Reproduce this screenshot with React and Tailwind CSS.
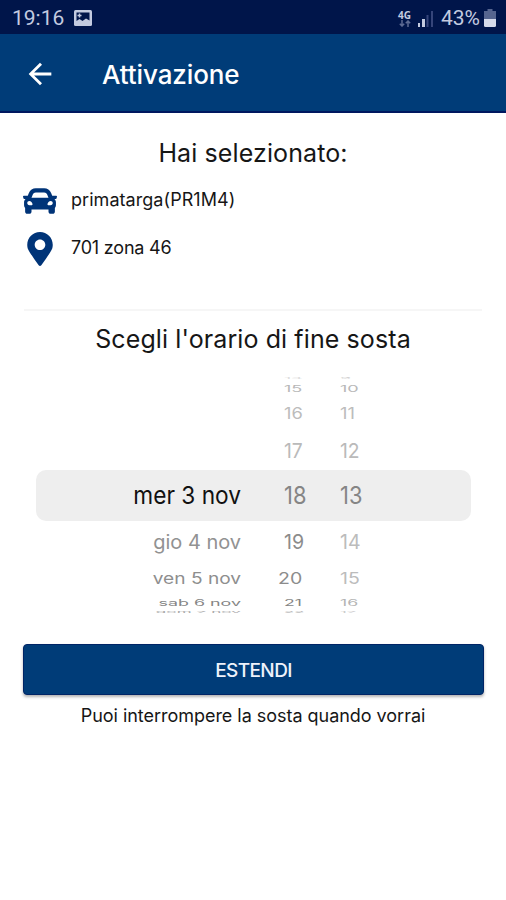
import { FaCar, FaMapMarkerAlt } from 'react-icons/fa'
import { MdArrowBack } from 'react-icons/md'

// one entry per visible line of the wheel, squashed towards the edges
const ROWS = [
    { height: 5, dateSx: 1, sx: 0.85, sy: 0.1, date: '', hour: '14', minute: '9', dateColor: '#999', hourColor: '#ddd', minuteColor: '#ccc' },
    { height: 15, dateSx: 1, sx: 0.86, sy: 0.44, date: '', hour: '15', minute: '10', dateColor: '#999', hourColor: '#b8b8b8', minuteColor: '#b8b8b8' },
    { height: 34, dateSx: 1, sx: 0.87, sy: 0.75, date: '', hour: '16', minute: '11', dateColor: '#999', hourColor: '#bcbcbc', minuteColor: '#bcbcbc' },
    { height: 40, dateSx: 1, sx: 0.92, sy: 0.97, date: '', hour: '17', minute: '12', dateColor: '#999', hourColor: '#bababa', minuteColor: '#bababa' },
    { height: 51, dateSx: 1.08, sx: 1.04, sy: 1.15, date: 'mer 3 nov', hour: '18', minute: '13', dateColor: '#111', hourColor: '#858585', minuteColor: '#858585' },
    { height: 40, dateSx: 0.95, sx: 0.93, sy: 0.95, date: 'gio 4 nov', hour: '19', minute: '14', dateColor: '#929292', hourColor: '#8c8c8c', minuteColor: '#bcbcbc' },
    { height: 34, dateSx: 0.91, sx: 0.93, sy: 0.75, date: 'ven 5 nov', hour: '20', minute: '15', dateColor: '#8e8e8e', hourColor: '#8c8c8c', minuteColor: '#bcbcbc' },
    { height: 14, dateSx: 0.85, sx: 0.84, sy: 0.42, date: 'sab 6 nov', hour: '21', minute: '16', dateColor: '#858585', hourColor: '#858585', minuteColor: '#b4b4b4' },
    { height: 6, dateSx: 0.82, sx: 0.8, sy: 0.13, date: 'dom 7 nov', hour: '22', minute: '17', dateColor: '#aaa', hourColor: '#b4b4b4', minuteColor: '#ccc' },
]

function StatusBar() {
    return (
        <div className="flex h-[34px] items-center justify-between bg-[#00154a] pl-3 pr-[10px] pt-0.5 font-[Roboto,sans-serif] text-[#c3cbe0]">
            <div className="flex items-center gap-[10px]">
                <span className="text-[21px] leading-none">19:16</span>
                <svg width="18" height="16" viewBox="0 0 18 16">
                    <rect width="18" height="16" rx="1.5" fill="#c3cbe0" />
                    <path d="M2.5 2.5h13v8l-3.500-2-3.500 2.500-3-2-3 2z" fill="#00154a" />
                    <path d="M5.500 3.500v4M3.500 5.500h4" stroke="#c3cbe0" strokeWidth="1.500" />
                </svg>
            </div>
            <div className="flex items-center">
                <div className="mr-[7px] flex flex-col items-center">
                    <span className="font-['Open_Sans',sans-serif] text-[10px] font-bold leading-[10px]">4G</span>
                    <svg width="12" height="7" viewBox="0 0 12 7" fill="none" stroke="#5d6b93" strokeWidth="1.5">
                        <path d="M3 0v6M.8 3.7 3 6l2.200-2.300M9 7V1M6.800 3.300 9 1l2.200 2.300" />
                    </svg>
                </div>
                <svg className="mr-[7px]" width="16" height="17" viewBox="0 0 16 17">
                    <rect x="0" y="13" width="2" height="4" fill="#c3cbe0" />
                    <rect x="4" y="9" width="3" height="8" fill="#c3cbe0" />
                    <rect x="8.5" y="5" width="2" height="12" fill="#35457a" />
                    <rect x="13" y="1" width="2" height="16" fill="#35457a" />
                </svg>
                <span className="mr-1 text-[21px] leading-none">43%</span>
                <svg width="12" height="18" viewBox="0 0 12 18">
                    <path d="M3.5 0h5v2H12v8H0V2h3.500z" fill="#56658f" />
                    <path d="M0 10h12v6.500Q12 18 10.500 18h-9Q0 18 0 16.500z" fill="#d5daea" />
                </svg>
            </div>
        </div>
    )
}

function Header() {
    return (
        <header className="flex h-[79px] items-center border-b-2 border-[#00185f] bg-[#003c78] pl-[23px] pt-0.5 text-white">
            <MdArrowBack size={34} />
            <h1 className="ml-[45px] pt-0.5 text-[26px] font-medium tracking-[-0.1px]">Attivazione</h1>
        </header>
    )
}

function WheelRow({ row }) {
    const transform = `scale(${row.sx}, ${row.sy})`

    return (
        <div className="flex shrink-0 items-center text-[21px] leading-none" style={{ height: row.height }}>
            <span
                className="w-[205px] origin-right whitespace-nowrap text-right"
                style={{ transform: `scale(${row.dateSx}, ${row.sy})`, color: row.dateColor }}
            >
                {row.date}
            </span>
            <span
                className={row.hour === '20' ? 'ml-[37px] mr-[6px] w-[30px] origin-left' : 'ml-[43px] w-[30px] origin-left'}
                style={{ transform, color: row.hourColor }}
            >
                {row.hour}
            </span>
            <span className="ml-[26px] w-[30px] origin-left" style={{ transform, color: row.minuteColor }}>
                {row.minute}
            </span>
        </div>
    )
}

function TimeWheel() {
    return (
        <div className="mx-9 mt-[19px] flex h-[239px] flex-col">
            {ROWS.map((row) => (
                <div key={row.hour} className={row.hour === '18' ? 'mr-[-1px] rounded-[10px] bg-[#eee]' : ''}>
                    <WheelRow row={row} />
                </div>
            ))}
        </div>
    )
}

export default function App() {
    return (
        <div className="h-[900px] w-[506px] overflow-hidden bg-white font-[Inter,sans-serif] text-[#161616]">
            <StatusBar />
            <Header />
            <main>
                <h2 className="mt-[22px] text-center text-[25px] leading-9 tracking-[0.1px]">Hai selezionato:</h2>
                <div className="mt-[12px] flex h-9 items-center pl-[23px]">
                    <FaCar size={34} color="#003478" />
                    <span className="ml-[14px] pb-[3px] text-[18px] tracking-[0.05px]">primatarga(PR1M4)</span>
                </div>
                <div className="mt-[12px] flex h-9 items-center pl-[23px]">
                    <div className="flex w-[34px] justify-center">
                        <FaMapMarkerAlt size={34} color="#003478" />
                    </div>
                    <span className="ml-[14px] pb-[3px] text-[18px] tracking-[-0.2px]">701 zona 46</span>
                </div>
                <div className="mx-6 mt-[42px] h-0.5 bg-[#f6f6f6]" />
                <h2 className="mt-[10px] text-center text-[25px] leading-9 tracking-[0.1px]">Scegli l'orario di fine sosta</h2>
                <TimeWheel />
                <button className="mx-[23px] mt-[29px] block h-[51px] w-[461px] rounded border border-[#002466] bg-[#003c78] pb-px text-[19px] font-medium tracking-[-0.6px] text-[#eef2fb] shadow-[0_2px_3px_rgba(0,0,0,0.3)]">
                    <span className="relative top-0.5">ESTENDI</span>
                </button>
                <p className="mt-[9px] text-center text-[18px] leading-6 tracking-[-0.03px]">Puoi interrompere la sosta quando vorrai</p>
            </main>
        </div>
    )
}
